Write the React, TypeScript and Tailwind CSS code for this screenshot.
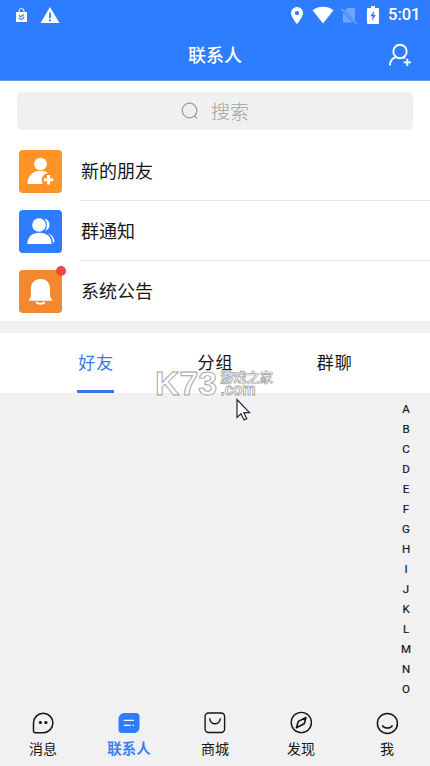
import { useState } from "react";
import type { ReactNode } from "react";

interface Entry {
  label: string;
  color: string;
  icon: ReactNode;
  unread?: boolean;
}

interface NavItem {
  label: string;
  icon: ReactNode;
}

const LETTERS = "ABCDEFGHIJKLMNO".split("");

const TABS = ["好友", "分组", "群聊"];

const ENTRIES: Entry[] = [
  {
    label: "新的朋友",
    color: "bg-[#ff9326]",
    icon: (
      <svg viewBox="0 0 43 43" className="w-[43px] h-[43px]">
        <circle cx="21.5" cy="14" r="6.3" fill="#fff" />
        <path d="M8.3 34c.3-7.6 5-13.2 13-13.2 3 0 5.7.8 7.6 2.2-3.8 1.2-6.2 3.5-6.2 7 0 1.5.4 2.9 1.1 4z" fill="#fff" />
        <path d="M29.6 25v9.6M24.8 29.8h9.6" stroke="#fff" strokeWidth="3" />
      </svg>
    ),
  },
  {
    label: "群通知",
    color: "bg-[#2e7cff]",
    icon: (
      <svg viewBox="0 0 43 43" className="w-[43px] h-[43px]">
        <path d="M25.5 8.6c3.7 1.2 5 3.7 5 6.2 0 3-1.6 5.3-4.3 6.4 2.3-3.8 2.3-8.7-.7-12.6zM29 23c4 1.5 6.3 4.8 6.5 9.2h-1.6c-.2-3.6-2-6.8-4.9-9.2z" fill="#fff" />
        <circle cx="20" cy="15" r="6.8" fill="#fff" />
        <path d="M8.3 34c.3-7.2 4.4-11.2 12.2-11.2S32.4 26.8 32.6 34z" fill="#fff" />
      </svg>
    ),
  },
  {
    label: "系统公告",
    color: "bg-[#f5872e]",
    unread: true,
    icon: (
      <svg viewBox="0 0 43 43" className="w-[43px] h-[43px]">
        <path d="M21.5 9c-5.9 0-9.6 4-9.6 9.8v7.7L10 29.4c-.5.9-.1 1.4.6 1.4h21.8c.8 0 1.1-.6.6-1.4l-1.9-2.9v-7.7C31.1 13 27.4 9 21.5 9z" fill="#fff" />
        <path d="M17.2 32.2c1.7 2.2 6.9 2.2 8.6 0" stroke="#fff" strokeWidth="2" fill="none" />
      </svg>
    ),
  },
];

const NAV: NavItem[] = [
  {
    label: "消息",
    icon: (
      <svg viewBox="0 0 24 24" className="w-6 h-6" fill="none" stroke="currentColor" strokeWidth="1.5">
        <path d="M2.5 12A9.7 9.7 0 1 1 12.2 21.7H4.3a1.8 1.8 0 0 1-1.8-1.8z" />
        <circle cx="9.4" cy="11.5" r="1.6" fill="currentColor" stroke="none" />
        <circle cx="14.9" cy="11.5" r="1.6" fill="currentColor" stroke="none" />
      </svg>
    ),
  },
  {
    label: "联系人",
    icon: (
      <svg viewBox="0 0 24 24" className="w-6 h-6">
        <path d="M7.5 2H19A3.5 3.5 0 0 1 22.5 5.500v11c0 3-2.200 5.500-5.500 5.500H5A3.500 3.500 0 0 1 1.500 18.500V8c0-3.300 2.700-6 6-6z" fill="#2e7cff" />
        <path d="M6.8 9.400h10M6.800 14.400h7M15.400 14.400H17" stroke="#fff" strokeWidth="1.1" />
      </svg>
    ),
  },
  {
    label: "商城",
    icon: (
      <svg viewBox="0 0 24 24" className="w-6 h-6" fill="none" stroke="currentColor" strokeWidth="1.4">
        <rect x="2.1" y="2" width="19.5" height="19.5" rx="3.5" />
        <path d="M6.7 7.3c.2 7.3 10.4 7.3 10.600 0" />
      </svg>
    ),
  },
  {
    label: "发现",
    icon: (
      <svg viewBox="0 0 24 24" className="w-6 h-6" fill="none" stroke="currentColor" strokeWidth="1.4">
        <circle cx="12.3" cy="11.5" r="10.1" />
        <path d="M17 6.5l-1.8 6.3-7.8 4 1.9-6.4z" strokeWidth="1.6" strokeLinejoin="round" />
      </svg>
    ),
  },
  {
    label: "我",
    icon: (
      <svg viewBox="0 0 24 24" className="w-6 h-6" fill="none" stroke="currentColor" strokeWidth="1.5">
        <circle cx="12.4" cy="12.4" r="10" />
        <path d="M7.3 14.3c2.1 3.7 8.1 3.7 10.2 0" />
      </svg>
    ),
  },
];

function StatusBar() {
  return (
    <div className="flex h-[30px] items-center justify-between pl-4 pr-[9px]">
      <div className="flex items-center gap-[13px]">
        <svg viewBox="0 0 11 14" className="w-[11px] h-[14px]">
          <path d="M3 4V3a2.5 2.5 0 0 1 5 0v1" fill="none" stroke="#fff" strokeWidth="1" />
          <path d="M0 4h11v10H0z" fill="#fff" />
          <path d="M3 7.3l1.7 1.5L8 6.6M3 9.8c1.2 2.4 4.4 1.6 5-1.2" fill="none" stroke="#2e7cff" strokeWidth="1.2" />
        </svg>
        <svg viewBox="0 0 20 18" className="w-5 h-[18px]">
          <path d="M10 1l9.5 16H.5z" fill="#fff" />
          <path d="M10 6.5V12M10 13.3v2" stroke="#2e7cff" strokeWidth="1.8" />
        </svg>
      </div>
      <div className="flex items-center">
        <svg viewBox="0 0 12 17" className="w-3 h-[17px]">
          <path d="M6 0a6 6 0 0 0-6 6c0 4.3 6 11 6 11s6-6.7 6-11a6 6 0 0 0-6-6zm0 4a2.1 2.1 0 1 1 0 4.2A2.1 2.1 0 0 1 6 4z" fill="#fff" />
        </svg>
        <svg viewBox="0 0 22 18" className="ml-[9px] w-[22px] h-[18px]">
          <path d="M11 17.5L.5 4.2C6.5-.4 15.5-.4 21.5 4.2z" fill="#fff" />
        </svg>
        <svg viewBox="0 0 18 17" className="ml-[6px] w-[18px] h-[17px]">
          <path d="M4.500 3.200L7.500 1H15v12.500zM3 5.500L13 15.500H3z" fill="#6fa5ff" />
          <path d="M1 1.500l15.500 15" stroke="#6fa5ff" strokeWidth="1.300" />
        </svg>
        <svg viewBox="0 0 12 18" className="ml-[9px] w-3 h-[18px]">
          <path d="M1.200 2H4V0h4v2h2.800A1.200 1.200 0 0 1 12 3.200v13.600a1.200 1.200 0 0 1-1.200 1.200H1.200A1.200 1.200 0 0 1 0 16.800V3.200A1.200 1.200 0 0 1 1.200 2z" fill="#fff" />
          <path d="M7.300 4.700L3.200 10.200h2.500l-.8 4.600 4-5.800H6.500z" fill="#2e7cff" />
        </svg>
        <span className="ml-[9px] w-[33px] font-[Roboto] text-[16.5px] leading-none font-medium">5:01</span>
      </div>
    </div>
  );
}

function Watermark() {
  return (
    <svg
      viewBox="0 0 122 32"
      className="pointer-events-none absolute left-[154px] top-[367px] h-8 w-[122px] overflow-visible"
      fill="#fff"
      fillOpacity="0.75"
      stroke="#a3a3a3"
      strokeWidth="0.9"
    >
      <text x="1" y="27.5" fontFamily="Liberation Sans" fontWeight="bold" fontSize="32.5" textLength="62" lengthAdjust="spacingAndGlyphs">
        K73
      </text>
      <text x="66" y="14.5" fontFamily="Noto Sans CJK SC" fontWeight="700" fontSize="13" textLength="53" lengthAdjust="spacingAndGlyphs" strokeWidth="0.7">
        游戏之家
      </text>
      <text x="66.5" y="27.5" fontFamily="Liberation Sans" fontWeight="bold" fontSize="16.5" textLength="35" lengthAdjust="spacingAndGlyphs">
        .com
      </text>
    </svg>
  );
}

export default function App() {
  const [activeTab, setActiveTab] = useState(0);
  const [activeNav, setActiveNav] = useState(1);

  return (
    <div className="relative flex h-[766px] w-[430px] flex-col overflow-hidden bg-[#f1f1f1] font-['Noto_Sans_CJK_SC',sans-serif] text-[#161616]">
      {/* Header */}
      <header className="h-[81px] shrink-0 border-b border-[#639cf0] bg-[#2e7cff] text-white">
        <StatusBar />
        <div className="grid h-[50px] grid-cols-[60px_1fr_60px] items-center">
          <h1 className="col-start-2 pb-0.5 text-center text-[18px] leading-[48px] font-medium">联系人</h1>
          <button className="flex justify-center">
            <svg viewBox="0 0 24 24" className="w-6 h-6" fill="none" stroke="currentColor" strokeWidth="1.9">
              <circle cx="12" cy="8.5" r="6.7" />
              <path d="M1.9 22.5c.3-4.6 2.7-7.8 6.8-8.6M15.4 14.3l1.7.8M19.3 15.7v7.4M15.6 19.4H23" />
            </svg>
          </button>
        </div>
      </header>

      {/* Search */}
      <div className="shrink-0 bg-white px-[17px] py-[11px]">
        <div className="flex h-[38px] items-center justify-center gap-3 rounded-[5px] bg-[#f0f0f0] text-[#a3a3a3]">
          <svg viewBox="0 0 18 18" className="w-[18px] h-[18px]" fill="none" stroke="#999" strokeWidth="1.2">
            <circle cx="8.5" cy="8.5" r="7.3" />
            <path d="M13.5 13.8l2.8 2.9" />
          </svg>
          <span className="pb-0.5 text-[19px] leading-none font-light">搜索</span>
        </div>
      </div>

      {/* Shortcuts */}
      <div className="shrink-0 bg-white">
        {ENTRIES.map((entry, i) => (
          <div key={entry.label} className="flex h-[60px] items-center pl-[19px]">
            <div className={`relative size-[43px] shrink-0 rounded-[4px] ${entry.color}`}>
              {entry.icon}
              {entry.unread && <span className="absolute -top-1 -right-1 size-[10px] rounded-full bg-[#e94b3c]" />}
            </div>
            <div
              className={`ml-[19px] flex h-full flex-1 items-center border-b text-[18px] ${
                i < ENTRIES.length - 1 ? "border-[#e3e3e3]" : "border-transparent"
              }`}
            >
              {entry.label}
            </div>
          </div>
        ))}
      </div>

      {/* Tabs */}
      <div className="mt-3 flex h-[60px] shrink-0 bg-white px-9">
        {TABS.map((tab, i) => (
          <button
            key={tab}
            onClick={() => setActiveTab(i)}
            className={`flex flex-1 flex-col items-center ${activeTab === i ? "text-[#3b78e7]" : ""}`}
          >
            <span className="h-[57px] pl-px text-[17px] leading-[58px] tracking-[1px]">{tab}</span>
            <span className={`h-[3px] w-[37px] ${activeTab === i ? "bg-[#3b78e7]" : ""}`} />
          </button>
        ))}
      </div>

      {/* Letter index */}
      <div className="flex flex-1 flex-col items-end pt-[6px] pr-[14px]">
        {LETTERS.map((letter) => (
          <span key={letter} className="h-5 w-5 text-center font-[Roboto] text-[11.5px] leading-5 [-webkit-text-stroke:0.2px]">
            {letter}
          </span>
        ))}
      </div>

      {/* Bottom navigation */}
      <nav className="flex h-[55px] shrink-0">
        {NAV.map((item, i) => (
          <button key={item.label} onClick={() => setActiveNav(i)} className="flex flex-1 flex-col items-center">
            {item.icon}
            <span
              className={`mt-[3px] leading-5 ${
                activeNav === i ? "text-[14.5px] font-bold text-[#3b7ff0]" : "text-[14px]"
              }`}
            >
              {item.label}
            </span>
          </button>
        ))}
      </nav>

      <Watermark />

      {/* Pointer */}
      <svg viewBox="0 0 16 24" className="pointer-events-none absolute left-[236px] top-[398px] h-6 w-4">
        <path d="M1 1.5v18l4-3.7 3 6.2 2.8-1.3-2.9-6h5.6z" fill="#fff" stroke="#23233a" strokeWidth="1.2" />
      </svg>
    </div>
  );
}
